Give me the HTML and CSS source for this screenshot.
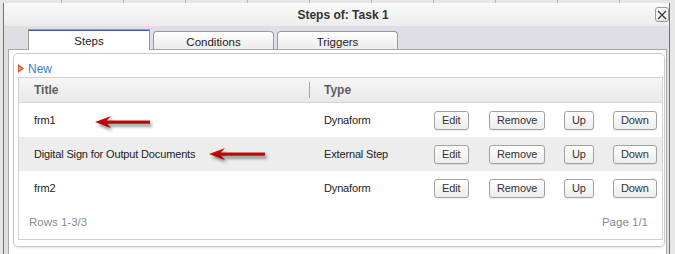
FILE: index.html
```html
<!DOCTYPE html>
<html lang="en">
  <head>
    <meta charset="UTF-8" />
    <title>Steps of: Task 1</title>
    <link rel="stylesheet" href="styles.css">
  </head>
  <body>
    <div class="window">
      <div class="titlebar">
        <span class="title">Steps of: Task 1</span>
        <button class="close">
          <svg width="10" height="10" viewBox="0 0 10 10">
            <path d="M1 1 L9 9 M9 1 L1 9" stroke="#3a3a3a" stroke-width="1.3" />
          </svg>
        </button>
      </div>

      <div class="body">
        <div class="tabs">
          <div class="tab active">Steps</div>
          <div class="tab">Conditions</div>
          <div class="tab">Triggers</div>
        </div>

        <div class="panel">
          <div class="box">
            <div class="toolbar">
              <svg class="new-icon" width="6" height="9" viewBox="0 0 6 9">
                <polygon points="0,0 6,4.5 0,9" fill="#e0552a" />
                <polygon points="1,2.5 3.5,4.5 1,6.5" fill="#f7b08c" />
              </svg>
              <a class="new" href="#">New</a>
            </div>

            <div class="grid">
              <div class="grid-head">
                <div class="head-title">Title</div>
                <div class="head-sep"></div>
                <div class="head-type">Type</div>
              </div>

              <div class="grid-row">
                <div class="cell-title">frm1</div>
                <div class="cell-type">Dynaform</div>
                <div><button class="btn">Edit</button></div>
                <div><button class="btn">Remove</button></div>
                <div><button class="btn">Up</button></div>
                <div><button class="btn">Down</button></div>
              </div>
              <div class="grid-row alt">
                <div class="cell-title">Digital Sign for Output Documents</div>
                <div class="cell-type">External Step</div>
                <div><button class="btn">Edit</button></div>
                <div><button class="btn">Remove</button></div>
                <div><button class="btn">Up</button></div>
                <div><button class="btn">Down</button></div>
              </div>
              <div class="grid-row">
                <div class="cell-title">frm2</div>
                <div class="cell-type">Dynaform</div>
                <div><button class="btn">Edit</button></div>
                <div><button class="btn">Remove</button></div>
                <div><button class="btn">Up</button></div>
                <div><button class="btn">Down</button></div>
              </div>

              <div class="grid-foot">
                <span>Rows 1-3/3</span>
                <span>Page 1/1</span>
              </div>
            </div>
          </div>
        </div>
      </div>
    </div>

    <!-- annotation arrows drawn over the grid -->
    <svg class="arrow arrow-1" width="64" height="20" viewBox="0 0 64 20">
      <defs>
        <linearGradient id="red1" x1="0" y1="0" x2="0" y2="1">
          <stop offset="0" stop-color="#e01414" />
          <stop offset="1" stop-color="#8e0000" />
        </linearGradient>
      </defs>
      <path d="M2 8 L18 2 L14 6.4 L57 6.4 L57 9.8 L14 9.8 L18 14 Z" fill="url(#red1)" />
    </svg>
    <svg class="arrow arrow-2" width="64" height="20" viewBox="0 0 64 20">
      <defs>
        <linearGradient id="red2" x1="0" y1="0" x2="0" y2="1">
          <stop offset="0" stop-color="#e01414" />
          <stop offset="1" stop-color="#8e0000" />
        </linearGradient>
      </defs>
      <path d="M2 8 L18 2 L14 6.4 L58 6.4 L58 9.8 L14 9.8 L18 14 Z" fill="url(#red2)" />
    </svg>
  </body>
</html>
```

FILE: styles.css
```css
html, body {
    margin: 0;
    height: 100%;
    overflow: hidden;
}
body {
    font-family: "Liberation Sans", Arial, sans-serif;
    font-size: 11px;
    color: #222;
    background: repeating-linear-gradient(90deg, #e6e6e6 0 61px, #b4b4b4 61px 62px);
    padding-top: 3px;
    box-sizing: border-box;
}
.window {
    margin-left: 3px;
    width: 667px;
    height: 251px;
    overflow: hidden;
    box-sizing: border-box;
    border-left: 1px solid #707070;
    border-right: 1px solid #707070;
    background-color: #dfdee4;
}
.titlebar {
    height: 23px;
    display: grid;
    grid-template-columns: 1fr auto 1fr;
    align-items: center;
    padding-left: 13px;
    background: linear-gradient(#fafafa, #ececec);
}
.title {
    grid-column: 2;
    font-weight: bold;
    font-size: 12px;
    color: #333;
}
.close {
    grid-column: 3;
    justify-self: end;
    width: 14px;
    height: 15px;
    padding: 0;
    border: 1px solid #9a9a9a;
    border-radius: 3px;
    background: linear-gradient(#ffffff, #ededed);
    display: flex;
    align-items: center;
    justify-content: center;
}

.tabs {
    height: 23px;
    box-sizing: border-box;
    padding-left: 24px;
    display: flex;
    align-items: flex-end;
    gap: 3px;
}
.tab {
    width: 121px;
    height: 18px;
    box-sizing: border-box;
    padding-top: 3px;
    line-height: 14px;
    text-align: center;
    font-size: 11.5px;
    color: #222;
    border: 1px solid #999;
    border-bottom: none;
    border-radius: 4px 4px 0 0;
    background: linear-gradient(#ffffff, #ebebeb);
}
.tab.active {
    position: relative;
    z-index: 1;
    width: 122px;
    height: 21px;
    margin-bottom: -1px;
    padding-top: 4px;
    border-radius: 0;
    border-top: 1px solid #e0923a;
    box-shadow: inset 0 1px 0 #3f6191;
    background: #fff;
}

.panel {
    margin: 0 2px 0 4px;
    height: 210px;
    box-sizing: border-box;
    padding: 3px 1px 0 4px;
    border: 1px solid #a8a8a8;
    border-bottom: none;
    background-color: #fff;
}
.box {
    border: 1px solid #cacaca;
    border-radius: 5px;
    box-shadow: 0 1px 2px rgba(0, 0, 0, 0.12);
    padding: 0 1px 6px 4px;
}
.toolbar {
    height: 23px;
    box-sizing: border-box;
    padding-top: 8px;
    display: flex;
    align-items: center;
    gap: 4px;
    line-height: 14px;
}
.new-icon {
    margin-top: -3px;
}
.new {
    color: #3a82c8;
    font-size: 12px;
    text-decoration: none;
    margin-top: -1px;
}

.grid {
    border: 1px solid #d2d2d2;
}
.grid-head {
    height: 24px;
    display: flex;
    align-items: center;
    border-bottom: 1px solid #d6d6d6;
    background: linear-gradient(#f6f6f6, #e8e8e8);
    font-weight: bold;
    font-size: 12px;
    color: #5e5e5e;
}
.head-title {
    width: 275px;
    padding-left: 15px;
}
.head-sep {
    width: 1px;
    height: 16px;
    background-color: #a6a6a6;
}
.head-type {
    padding-left: 14px;
}
.grid-row {
    height: 34px;
    display: grid;
    grid-template-columns: 291px 124px 55px 75px 49px 1fr;
    align-items: center;
    letter-spacing: -0.15px;
}
.grid-row.alt {
    background-color: #ededed;
}
.cell-title {
    padding-left: 15px;
}
.cell-type {
    padding-left: 14px;
}
.btn {
    height: 19px;
    padding: 0 7px;
    border: 1px solid #a2a2a2;
    border-radius: 3px;
    background: linear-gradient(#ffffff, #ececec);
    box-shadow: 0 1px 1px rgba(0, 0, 0, 0.08);
    font-family: "Liberation Sans", Arial, sans-serif;
    font-size: 11px;
    letter-spacing: -0.1px;
    color: #333;
    display: block;
}
.grid-foot {
    height: 34px;
    display: flex;
    align-items: center;
    justify-content: space-between;
    padding: 0 14px 0 10px;
    color: #8a8898;
    font-size: 11.5px;
}

.arrow {
    position: absolute;
    filter: drop-shadow(2px 3px 1.5px rgba(0, 0, 0, 0.4));
}
.arrow-1 {
    left: 93px;
    top: 114px;
}
.arrow-2 {
    left: 207px;
    top: 146px;
}
```
